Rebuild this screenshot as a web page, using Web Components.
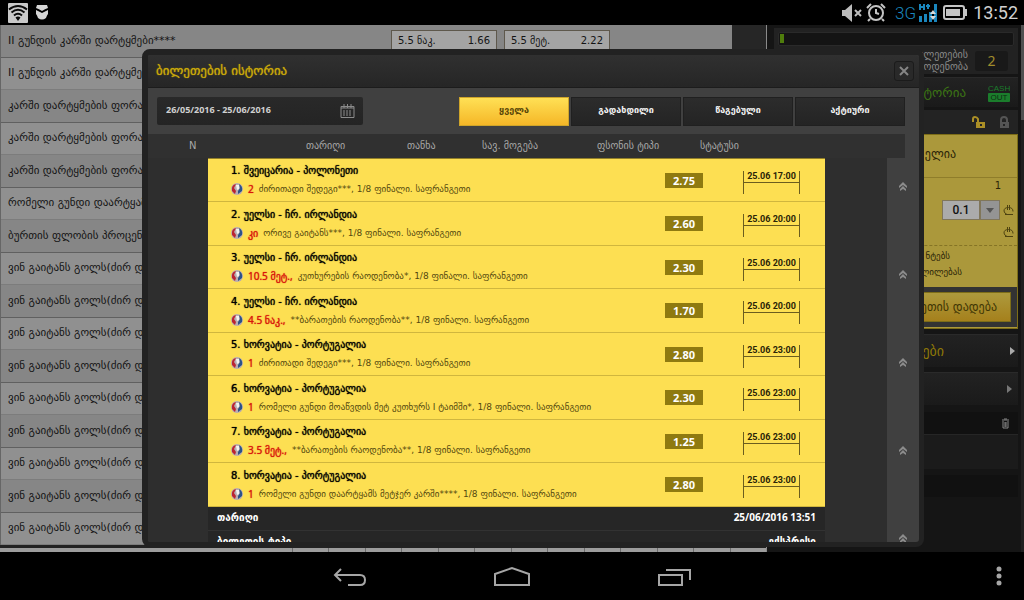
<!DOCTYPE html>
<html lang="ka">
<head>
<meta charset="utf-8">
<title>ბილეთების ისტორია</title>
<style>
  body {
    margin: 0;
    height: 100vh;
    display: flex;
    flex-direction: column;
    overflow: hidden;
    background: #000;
    font-family: "DejaVu Sans", "Noto Sans", sans-serif;
  }
  main {
    position: relative;
    flex: 1;
    min-height: 0;
    display: flex;
    background: #171717;
    overflow: hidden;
  }
</style>
</head>
<body>
<status-bar></status-bar>
<main>
  <market-list></market-list>
  <bet-sidebar></bet-sidebar>
  <history-dialog heading="ბილეთების ისტორია">
    <date-range slot="tools" value="26/05/2016 - 25/06/2016"></date-range>
    <filter-tabs slot="tools"></filter-tabs>
    <ticket-table></ticket-table>
  </history-dialog>
</main>
<nav-bar></nav-bar>

<script>
class StatusBar extends HTMLElement {
  constructor() {
    super();
    this.attachShadow({ mode: 'open' });

    this.shadowRoot.innerHTML = `
      <style>
        :host {
          display: flex;
          height: 25px;
          flex: none;
          align-items: center;
          justify-content: space-between;
          padding: 0 6px 0 8px;
          background: #000;
          color: #d0d0d0;
          font-family: Roboto, sans-serif;
        }
        div {
          display: flex;
          align-items: center;
          gap: 8px;
        }
        .right { gap: 4px; }
        .net { display: flex; gap: 2px; margin-left: 5px; color: #1a86bd; font-size: 17px; font-weight: 300; }
        .clock { font-size: 18px; line-height: 26px; margin-left: 2px; }
      </style>
      <div>
        <svg width="20" height="20" viewBox="0 0 20 20">
          <rect width="20" height="20" rx="1" fill="#c9c9c9"/>
          <g fill="none" stroke="#0a0a0a" stroke-width="2">
            <path d="M1 6.500Q10 -.5 19 6.500"/>
            <path d="M3.500 9.500Q10 4 16.500 9.500"/>
            <path d="M6 12.500Q10 9 14 12.500"/>
          </g>
          <path d="M7.500 14.500Q10 12.500 12.500 14.500L10 18Z" fill="#0a0a0a"/>
        </svg>
        <svg width="12" height="15" viewBox="0 0 12 15">
          <path d="M1 0H11L12 3Q9 4 6 6Q3 4 0 3Z" fill="#d6d6d6"/>
          <path d="M0 5L6 8L12 5V9Q11 10 10 13Q6 16 2 13Q1 10 0 9Z" fill="#d6d6d6"/>
        </svg>
      </div>
      <div class="right">
        <svg width="20" height="18" viewBox="0 0 20 18">
          <path d="M0 6H3L10 0V18L3 12H0Z" fill="#bdbdbd"/>
          <path d="M13 6L19 12M19 6L13 12" stroke="#bdbdbd" stroke-width="2"/>
        </svg>
        <svg width="20" height="19" viewBox="0 0 20 19" fill="none" stroke="#c4c4c4" stroke-width="2">
          <circle cx="10" cy="10" r="7"/>
          <path d="M1 5L5 1M19 5L15 1M4 16L2 18M16 16L18 18M10 6V10L13 11"/>
        </svg>
        <div class="net">
          <span>3G</span>
          <svg width="21" height="20" viewBox="0 0 21 20">
            <path d="M2 1V7M6 1V7M2 4H6M10 1V6M8 3H12" stroke="#1a86bd" stroke-width="2" fill="none"/>
            <path d="M1 13H4V19H1ZM6 11H9V19H6ZM11 9H14V19H11ZM16 1H19V19H16Z" fill="#1a86bd"/>
            <path d="M12 11L15 7L18 11ZM12 13H18L15 17Z" fill="#d9d9d9"/>
          </svg>
        </div>
        <svg width="24" height="15" viewBox="0 0 24 15">
          <rect x="1" y="1" width="20" height="13" rx="2" fill="none" stroke="#c4c4c4" stroke-width="2"/>
          <rect x="3" y="4" width="14" height="7" fill="#c4c4c4"/>
          <path d="M22 4H24V11H22Z" fill="#c4c4c4"/>
        </svg>
        <span class="clock">13:52</span>
      </div>
    `;
  }
}

class NavBar extends HTMLElement {
  constructor() {
    super();
    this.attachShadow({ mode: 'open' });

    this.shadowRoot.innerHTML = `
      <style>
        :host {
          display: grid;
          grid-template-columns: 1fr auto 1fr;
          height: 48px;
          box-sizing: border-box;
          padding-top: 2px;
          flex: none;
          align-items: center;
          background: #000;
        }
        nav {
          grid-column: 2;
          display: flex;
          gap: 128px;
        }
        button {
          display: block;
          background: none;
          border: none;
          padding: 0;
          height: 24px;
        }
        .more { justify-self: end; margin-right: 22px; }
        svg { display: block; fill: none; stroke: #a6a6a6; stroke-width: 2; }
        circle { fill: #a6a6a6; stroke: none; }
      </style>
      <nav>
        <button aria-label="Back">
          <svg width="34" height="24" viewBox="0 0 34 24"><path d="M9 4L3 10L9 16M3 10H28Q33 10 33 15Q33 20 28 20H16"/></svg>
        </button>
        <button aria-label="Home">
          <svg width="36" height="24" viewBox="0 0 36 24"><path d="M1 20V9L18 3L35 9V20Z"/></svg>
        </button>
        <button aria-label="Recent">
          <svg width="34" height="24" viewBox="0 0 34 24"><path d="M1 10H24V20H1ZM8 5H32V15"/><path d="M5 7H28V17" stroke="#000"/></svg>
        </button>
      </nav>
      <button class="more" aria-label="Menu">
        <svg width="6" height="24" viewBox="0 0 6 24"><circle cx="3" cy="4" r="2.500"/><circle cx="3" cy="11" r="2.500"/><circle cx="3" cy="18" r="2.500"/></svg>
      </button>
    `;
  }
}

class OddsButton extends HTMLElement {
  constructor() {
    super();
    this.attachShadow({ mode: 'open' });

    this.shadowRoot.innerHTML = `
      <style>
        :host { display: block; width: 106px; }
        button {
          display: flex;
          justify-content: space-between;
          align-items: center;
          width: 100%;
          height: 20px;
          padding: 0 6px;
          background: #a4a4a4;
          border: 1px solid #5e584c;
          color: #141414;
          font: 10px "DejaVu Sans", sans-serif;
        }
      </style>
      <button><slot></slot><span></span></button>
    `;
    this.shadowRoot.querySelector('span').textContent = this.getAttribute('odds');
  }
}

class MarketList extends HTMLElement {
  constructor() {
    super();
    this.attachShadow({ mode: 'open' });

    const markets = [
      'II გუნდის კარში დარტყმები****',
      'II გუნდის კარში დარტყმები',
      'კარში დარტყმების ფორა',
      'კარში დარტყმების ფორა',
      'კარში დარტყმების ფორა',
      'რომელი გუნდი დაარტყამს',
      'ბურთის ფლობის პროცენტი',
      ...Array(9).fill('ვინ გაიტანს გოლს(ძირ დრო)')
    ];

    this.shadowRoot.innerHTML = `
      <style>
        :host {
          flex: 1;
          min-width: 0;
          display: flex;
          flex-direction: column;
          border-right: 1px solid #8a8a8a;
          background: #262626;
        }
        ul {
          flex: 1;
          display: grid;
          grid-template-rows: repeat(16, 1fr);
          margin: 0 34px 0 0;
          padding: 0;
          list-style: none;
          border-left: 1px solid #666;
        }
        li {
          display: grid;
          grid-template-columns: 1fr auto;
          align-items: center;
          padding: 0 0 1px 7px;
          background: #868686;
          border-bottom: 1px solid #606060;
          box-sizing: border-box;
          color: #141414;
          font-size: 11px;
          white-space: nowrap;
        }
        li:nth-child(even) {
          background: #909090;
          border-bottom-color: #7c7c7c;
        }
        .odds {
          display: flex;
          gap: 7px;
          padding-right: 122px;
        }
        .next {
          display: grid;
          grid-template-columns: 292px repeat(13, 1fr);
          height: 4px;
          gap: 1px;
          border-top: 3px solid #222;
          background: #6c6c6c;
        }
        .next i { background: #9c9c9c; }
      </style>
      <ul>${markets.map((m, i) => `
        <li>${m}${i === 0 ? `
          <div class="odds">
            <odds-button odds="1.66">5.5 ნაკ.</odds-button>
            <odds-button odds="2.22">5.5 მეტ.</odds-button>
          </div>` : ''}
        </li>`).join('')}
      </ul>
      <div class="next">${'<i></i>'.repeat(14)}</div>
    `;
  }
}

class BetSidebar extends HTMLElement {
  constructor() {
    super();
    this.attachShadow({ mode: 'open' });

    const lari = `
      <svg width="11" height="11" viewBox="0 0 11 11" fill="none" stroke="#4d4210">
        <path d="M2 9.500H10M4 9.500Q1 8 1 6Q1 2.500 5.500 2.500Q10 2.500 10 6.500M4.500 0V5M6.500 0V5"/>
      </svg>`;

    this.shadowRoot.innerHTML = `
      <style>
        :host {
          flex: none;
          width: 257px;
          display: grid;
          grid-template-columns: 1fr 3px;
          gap: 3px;
          box-sizing: border-box;
          padding-left: 7px;
          background: #151515;
          text-align: right;
          font-size: 10px;
          color: #8a8a8a;
        }
        .scroll { background: #1f1f1f; }
        .scroll::before { content: ""; display: block; height: 95px; background: #505050; }
        .col { display: flex; flex-direction: column; }
        .count {
          height: 46px;
          margin-top: 3px;
          background: #222;
          padding: 4px;
          box-sizing: border-box;
        }
        .meter {
          height: 10px;
          border: 1px solid #2a2a2a;
          border-radius: 2px;
          background: #141414;
          padding: 1px;
        }
        .meter::before { content: ""; display: block; width: 4px; height: 9px; background: #4f7d0c; }
        .total {
          display: flex;
          justify-content: flex-end;
          gap: 7px;
          line-height: 12px;
          margin-top: 3px;
          padding-right: 6px;
        }
        .total b {
          width: 33px;
          border-radius: 3px;
          background: #191919;
          color: #a08c2c;
          font: 14px/20px "Noto Sans", sans-serif;
          text-align: center;
          align-self: center;
        }
        .history, .link {
          display: flex;
          align-items: center;
          justify-content: flex-end;
          background: linear-gradient(#222, #1a1a1a);
          border-top: 1px solid #2a2a2a;
          box-sizing: border-box;
          text-decoration: none;
        }
        .history {
          height: 30px;
          margin-top: 3px;
          padding-right: 8px;
          gap: 22px;
          color: #3c7414;
          font-size: 13px;
        }
        .cash {
          font: 8px/9px "Liberation Sans", sans-serif;
          text-align: center;
          width: 22px;
          color: #1b7d2c;
        }
        .cash i { display: block; font-style: normal; background: #1b7d2c; color: #0e2c12; border-radius: 1px; }
        .locks {
          display: flex;
          justify-content: flex-end;
          align-items: center;
          gap: 12px;
          padding-right: 8px;
          height: 24px;
          margin-top: 3px;
          background: #232323;
        }
        .slip {
          background: #ab983b;
          border: 1px solid #7d6d18;
          box-sizing: border-box;
          height: 195px;
          color: #2b2508;
        }
        .name { height: 42px; line-height: 38px; font-size: 12px; padding-right: 61px; border-bottom: 1px solid #8f7d2a; }
        .stake { padding: 0 3px 0 0; border-bottom: 1px dashed #857425; height: 67px; }
        .stake p { margin: 0; line-height: 16px; padding-right: 13px; }
        .stake label { display: flex; justify-content: flex-end; align-items: center; gap: 3px; margin-top: 6px; }
        .stake input {
          width: 38px;
          height: 20px;
          box-sizing: border-box;
          border: 1px solid #80765a;
          background: #ababab;
          text-align: center;
          padding: 0;
          color: #111;
          font: 500 12px Roboto, sans-serif;
          margin-right: -3px;
        }
        .stake button { width: 20px; height: 20px; padding: 0; border: 1px solid #80765a; background: #949494; }
        .stake button svg { display: block; margin: auto; }
        .coin { display: flex; justify-content: flex-end; margin-top: 7px; }
        .note { margin: 0; padding: 2px 0 0; line-height: 16px; font-size: 9px; height: 39px; }
        .note span { display: block; padding-right: 67px; }
        .note span + span { padding-right: 55px; }
        .place { background: #333; padding: 5px 6px; height: 30px; }
        .place button {
          display: block;
          width: 100%;
          height: 30px;
          border: 1px solid #7d6d18;
          background: linear-gradient(#ad9a3d, #a5801c);
          color: #403605;
          text-align: right;
          padding: 0 13px;
          font: 12px "DejaVu Sans", sans-serif;
        }
        .link { height: 33px; margin-top: 5px; padding-right: 3px; color: #8d7807; font-size: 14px; }
        .link svg { margin-left: 66px; }
        .bar { display: flex; justify-content: flex-end; align-items: center; height: 22px; margin-top: 7px; padding-right: 8px; background: #111; border-bottom: 1px solid #262626; }
        .box { height: 34px; background: #1b1b1b; }
        .bar + .box + .box { margin-top: 6px; height: 22px; background: #111; }
      </style>
      <div class="col">
        <div class="count">
          <div class="meter"></div>
          <div class="total"><span>ბილეთების<br>რაოდენობა</span><b>2</b></div>
        </div>
        <a class="history" href="#">ისტორია <span class="cash">CASH<i>OUT</i></span></a>
        <div class="locks">
          <svg width="14" height="13" viewBox="0 0 14 13"><path d="M1 6V3Q1 1 3 1T6 3V6" fill="none" stroke="#ab8f26" stroke-width="2"/><path d="M4 6H13V12H4ZM8 8V10H10V8Z" fill="#ab8f26" fill-rule="evenodd"/></svg>
          <svg width="12" height="13" viewBox="0 0 12 13"><path d="M3 6V4Q3 1 6 1T9 4V6" fill="none" stroke="#555" stroke-width="2"/><path d="M2 6H11V12H2ZM5 8V10H7V8Z" fill="#555" fill-rule="evenodd"/></svg>
        </div>
        <div class="slip">
          <div class="name">ელია</div>
          <div class="stake">
            <p>1</p>
            <label>
              <input type="text" value="0.1" aria-label="თანხა">
              <button aria-label="აირჩიე"><svg width="8" height="5"><path d="M0 0H8L4 5Z" fill="#555"/></svg></button>
              ${lari}
            </label>
            <div class="coin">${lari}</div>
          </div>
          <p class="note"><span>ნტებს</span><span>ლილებას</span></p>
          <div class="place"><button>ბილეთის დადება</button></div>
        </div>
        <a class="link" href="#">ები<svg width="5" height="8"><path d="M0 0L5 4L0 8Z" fill="#aaa"/></svg></a>
        <a class="link" href="#"><svg width="8" height="8"><path d="M0 0L5 4L0 8Z" fill="#777"/></svg></a>
        <div class="bar"><svg width="9" height="11" viewBox="0 0 9 11" fill="none" stroke="#888"><path d="M1 2H8M3 1H6M2 3V10H7V3M4 4V9M5 4V9"/></svg></div>
        <div class="box"></div>
        <div class="box"></div>
      </div>
      <div class="scroll"></div>
    `;
  }
}

class HistoryDialog extends HTMLElement {
  constructor() {
    super();
    this.attachShadow({ mode: 'open' });

    this.shadowRoot.innerHTML = `
      <style>
        /* sits over the market list and the sidebar */
        :host {
          position: absolute;
          inset: 24px 100px 5px 142px;
          display: flex;
          flex-direction: column;
          border: solid #222;
          border-width: 6px 5px 5px 6px;
          border-radius: 8px;
          background: #404040;
          overflow: hidden;
        }
        header {
          display: flex;
          flex: none;
          align-items: center;
          justify-content: space-between;
          height: 31px;
          padding: 0 5px 1px 8px;
          background: linear-gradient(#303030, #262626);
          border-bottom: 1px solid #1c1c1c;
        }
        h1 {
          margin: 0;
          font-size: 13px;
          font-weight: normal;
          color: #c9a90a;
          text-shadow: 0 0 1px #c9a90a;
        }
        header button {
          width: 20px;
          height: 20px;
          padding: 0;
          background: #292929;
          border: 1px solid #1b1b1b;
          border-radius: 3px;
        }
        header svg { display: block; margin: auto; }
        .tools {
          display: flex;
          flex: none;
          align-items: center;
          justify-content: space-between;
          height: 46px;
          padding: 0 14px 0 9px;
        }
      </style>
      <header>
        <h1></h1>
        <button aria-label="დახურვა"><svg width="10" height="10" viewBox="0 0 10 10"><path d="M1 1L9 9M9 1L1 9" stroke="#858585" stroke-width="2"/></svg></button>
      </header>
      <div class="tools"><slot name="tools"></slot></div>
      <slot></slot>
    `;
    this.shadowRoot.querySelector('h1').textContent = this.getAttribute('heading');
  }
}

class DateRange extends HTMLElement {
  constructor() {
    super();
    this.attachShadow({ mode: 'open' });

    this.shadowRoot.innerHTML = `
      <style>
        :host { display: block; width: 206px; }
        label {
          display: flex;
          align-items: center;
          height: 28px;
          padding: 0 8px 0 9px;
          background: linear-gradient(#292929, #242424);
          border-radius: 2px;
        }
        input {
          flex: 1;
          min-width: 0;
          padding: 0 0 4px;
          border: none;
          background: none;
          color: #d0d0d0;
          font: bold 9px "Noto Sans", sans-serif;
        }
      </style>
      <label>
        <input type="text" aria-label="თარიღი">
        <svg width="15" height="14" viewBox="0 0 15 14" fill="none" stroke="#8b8b8b">
          <path d="M1 2.500H14V13.500H1ZM1 4H14M4 0V4M11 0V4M7.500 0V4"/>
          <path d="M3 7H12M3 9H12M3 11H12" stroke-dasharray="2 1"/>
        </svg>
      </label>
    `;
    this.shadowRoot.querySelector('input').value = this.getAttribute('value');
  }
}

class FilterTabs extends HTMLElement {
  constructor() {
    super();
    this.attachShadow({ mode: 'open' });

    this.shadowRoot.innerHTML = `
      <style>
        :host { display: flex; gap: 2px; }
        button {
          width: 110px;
          height: 29px;
          padding: 0 0 2px;
          border: 1px solid #202020;
          background: linear-gradient(#2c2c2c, #242424);
          color: #f0f0f0;
          font: bold 9px "DejaVu Sans", sans-serif;
        }
        .active {
          border-color: #cfa52a;
          background: linear-gradient(#ffe055, #f5b727);
          color: #594708;
        }
      </style>
      <button class="active">ყველა</button>
      <button>გადახდილი</button>
      <button>წაგებული</button>
      <button>აქტიური</button>
    `;

    this.shadowRoot.querySelectorAll('button').forEach(button => {
      button.addEventListener('click', () => this.select(button));
    });
  }

  select(button) {
    this.shadowRoot.querySelector('.active').classList.remove('active');
    button.classList.add('active');
  }
}

class TicketTable extends HTMLElement {
  constructor() {
    super();
    this.attachShadow({ mode: 'open' });

    const columns = [
      ['N', 158], ['თარიღი', 101], ['თანხა', 75], ['სავ. მოგება', 115],
      ['ფსონის ტიპი', 103], ['სტატუსი', 80]
    ];

    this.shadowRoot.innerHTML = `
      <style>
        :host {
          flex: 1;
          min-height: 0;
          display: grid;
          grid-template-columns: 1fr 32px;
          grid-template-rows: 24px 1fr;
          overflow: hidden;
        }
        .head {
          grid-column: 1 / 3;
          margin-right: 14px;
          background: #303030;
        }
        table {
          width: 100%;
          height: 23px;
          table-layout: fixed;
          border-collapse: collapse;
        }
        th {
          padding: 0;
          color: #a8a8a8;
          font-size: 10px;
          font-weight: normal;
          text-align: left;
          white-space: nowrap;
        }
        th:first-child { padding-left: 41px; }
        .body {
          padding: 0 62px 0 60px;
          background: #2e2e2e;
          overflow: hidden;
        }
        .side {
          display: flex;
          flex-direction: column;
          align-items: center;
          gap: 79px;
          padding-top: 24px;
          overflow: hidden;
        }
        .side button { flex: none; display: block; background: none; border: none; padding: 0; height: 9px; }
        svg { display: block; }
      </style>
      <div class="head">
        <table>
          <colgroup>${columns.map(c => `<col style="width: ${c[1]}px">`).join('')}<col></colgroup>
          <thead><tr>${columns.map(c => `<th scope="col">${c[0]}</th>`).join('')}<td></td></tr></thead>
        </table>
      </div>
      <div class="body"><ticket-details></ticket-details></div>
      <div class="side">${`
        <button aria-label="დაკეცვა"><svg width="8" height="9" viewBox="0 0 8 9"><path d="M0 4L4 0L8 4V6L4 3L0 6ZM1 7L4 4L7 7V9L4 7L1 9Z" fill="#8c8c8c"/></svg></button>`.repeat(5)}
      </div>
    `;
  }
}

class TicketDetails extends HTMLElement {
  constructor() {
    super();
    this.attachShadow({ mode: 'open' });

    const selections = [
      ['შვეიცარია - პოლონეთი', '2', 'ძირითადი შედეგი***', '2.75', '17:00'],
      ['უელსი - ჩრ. ირლანდია', 'კი', 'ორივე გაიტანს***', '2.60', '20:00'],
      ['უელსი - ჩრ. ირლანდია', '10.5 მეტ.,', 'კუთხურების რაოდენობა*', '2.30', '20:00'],
      ['უელსი - ჩრ. ირლანდია', '4.5 ნაკ.,', '**ბარათების რაოდენობა**', '1.70', '20:00'],
      ['ხორვატია - პორტუგალია', '1', 'ძირითადი შედეგი***', '2.80', '23:00'],
      ['ხორვატია - პორტუგალია', '1', 'რომელი გუნდი მოაწვდის მეტ კუთხურს I ტაიმში*', '2.30', '23:00'],
      ['ხორვატია - პორტუგალია', '3.5 მეტ.,', '**ბარათების რაოდენობა**', '1.25', '23:00'],
      ['ხორვატია - პორტუგალია', '1', 'რომელი გუნდი დაარტყამს მეტჯერ კარში****', '2.80', '23:00']
    ];

    this.shadowRoot.innerHTML = `
      <style>
        :host { display: block; }
        table {
          width: 100%;
          table-layout: fixed;
          border-spacing: 0;
          background: #fddf52;
          border-top: 1px solid #927f28;
        }
        td {
          height: 43px;
          box-sizing: border-box;
          padding: 0;
          border-bottom: 1px solid #d0b63e;
        }
        tr:nth-child(even) td { height: 44px; }
        .info { padding-left: 23px; white-space: nowrap; }
        .match { color: #000; font-size: 10px; line-height: 18px; text-shadow: 0 0 1px #000; }
        .line { display: flex; align-items: center; height: 18px; }
        .pick { margin: 0 5px; color: #d8160c; font-family: "Noto Sans", "DejaVu Sans", sans-serif; font-size: 10px; text-shadow: 0 0 1px #d8160c; }
        .text { color: #54490f; font-size: 9px; }
        .odds b {
          display: block;
          width: 38px;
          background: #8f7a10;
          color: #fff;
          font: bold 11px/15px "Noto Sans", sans-serif;
          text-align: center;
        }
        td.date { padding-top: 4px; }
        time {
          display: block;
          width: 55px;
          height: 23px;
          border: solid #6b5d1e;
          border-width: 0 1px;
          color: #2a2407;
          font: bold 9px/10px Roboto, sans-serif;
          text-align: center;
          background: linear-gradient(#6b5d1e, #6b5d1e) 0 11px / 100% 1px no-repeat;
        }
        dl { margin: 0; background: #262626; color: #fff; font-size: 10px; line-height: 21px; }
        dl div {
          display: flex;
          justify-content: space-between;
          height: 23px;
          padding: 0 9px;
          border-bottom: 1px solid #323232;
        }
        dt, dd { margin: 0; font-weight: bold; }
        dd { font-family: "Noto Sans", "DejaVu Sans", sans-serif; }
      </style>
      <table>
        <colgroup><col><col style="width: 78px"><col style="width: 82px"></colgroup>
        <tbody>${selections.map(([match, pick, text, odds, time], i) => `
          <tr>
            <td class="info">
              <div class="match">${i + 1}. ${match}</div>
              <div class="line">
                <svg width="12" height="12" viewBox="0 0 12 12">
                  <circle cx="6" cy="6" r="6" fill="#b9adb0"/>
                  <path d="M5 1Q0 2 1 8L4 11L5 8L3 5Z" fill="#bd2430"/>
                  <path d="M8 1Q12 3 11 8L7 11L7 8L9 5Z" fill="#2b5288"/>
                  <path d="M5 2H8V6L6 7Z" fill="#f3f3f3"/>
                </svg>
                <span class="pick">${pick}</span>
                <span class="text">${text}, 1/8 ფინალი. საფრანგეთი</span>
              </div>
            </td>
            <td class="odds"><b>${odds}</b></td>
            <td class="date"><time>25.06 ${time}</time></td>
          </tr>`).join('')}
        </tbody>
      </table>
      <dl>
        <div><dt>თარიღი</dt><dd>25/06/2016 13:51</dd></div>
        <div><dt>ბილეთის ტიპი</dt><dd>ექსპრესი</dd></div>
      </dl>
    `;
  }
}

customElements.define('status-bar', StatusBar);
customElements.define('nav-bar', NavBar);
customElements.define('odds-button', OddsButton);
customElements.define('market-list', MarketList);
customElements.define('bet-sidebar', BetSidebar);
customElements.define('history-dialog', HistoryDialog);
customElements.define('date-range', DateRange);
customElements.define('filter-tabs', FilterTabs);
customElements.define('ticket-table', TicketTable);
customElements.define('ticket-details', TicketDetails);
</script>
</body>
</html>
